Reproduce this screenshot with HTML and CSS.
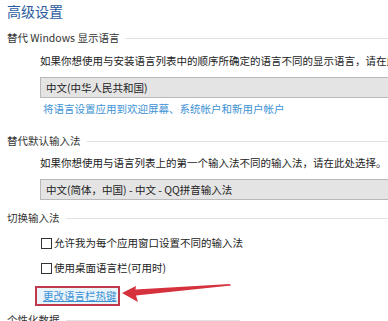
FILE: index.html
```html
<!DOCTYPE html>
<html lang="zh-CN">
<head>
    <meta charset="UTF-8">
    <meta name="viewport" content="width=device-width, initial-scale=1.0">
    <title>高级设置</title>
    <link rel="stylesheet" href="styles.css">
</head>
<body>
    <div class="page">
        <div class="title">高级设置</div>

        <div class="heading h1">替代 Windows 显示语言</div>
        <div class="desc d1">如果你想使用与安装语言列表中的顺序所确定的语言不同的显示语言，请在此处选择。</div>
        <div class="select s1">中文(中华人民共和国)</div>
        <a class="link l1" href="#">将语言设置应用到欢迎屏幕、系统帐户和新用户帐户</a>

        <div class="heading h2">替代默认输入法</div>
        <div class="desc d2">如果你想使用与语言列表上的第一个输入法不同的输入法，请在此处选择。</div>
        <div class="select s2">中文(简体，中国) - 中文 - QQ拼音输入法</div>

        <div class="heading h3">切换输入法</div>
        <label class="check c1"><span class="box"></span>允许我为每个应用窗口设置不同的输入法</label>
        <label class="check c2"><span class="box"></span>使用桌面语言栏(可用时)</label>
        <div class="hotkey">
            <a class="link marked" href="#">更改语言栏热键</a>
            <svg class="arrow" width="115" height="24" viewBox="0 0 115 24">
                <path d="M2 12 L16 5 L15.5 8.5 L110 3 L111 4.5 L16 14.5 L18 21 Z" fill="#d6323d"/>
            </svg>
        </div>

        <div class="heading h4 short">个性化数据</div>
    </div>
</body>
</html>
```

FILE: styles.css
```css
body { margin: 0; background: #fff; font-family: "Noto Sans CJK SC", "Noto Sans", sans-serif; color: #222; }
.page { padding-left: 7px; width: 381px; overflow: hidden; height: 321px; }
.title { height: 22px; line-height: 22px; font-size: 14px; color: #2a5b9e; }

.heading { display: flex; align-items: center; font-size: 10.5px; line-height: 12px; height: 12px; color: #333; white-space: nowrap; }
.heading::after { content: ""; flex: 1; border-top: 1px solid #e2e2e2; margin-left: 6px; }
.heading.short { width: 233px; }
.h1 { margin-top: 10px; }
.h2 { margin-top: 20px; }
.h3 { margin-top: 12px; }
.h4 { margin-top: 13px; }

.desc { margin-left: 33px; font-size: 10.5px; line-height: 12px; height: 12px; white-space: nowrap; }
.d1 { margin-top: 11px; }
.d2 { margin-top: 10px; }

.select { margin-left: 33px; margin-top: 10px; height: 19px; line-height: 19px; padding-left: 5px; font-size: 10.5px; background: #e4e4e4; border: 1px solid #b9b9b9; border-right: none; white-space: nowrap; }

.link { display: block; color: #3d92d4; font-size: 10.5px; line-height: 12px; white-space: nowrap; text-decoration: none; }
.l1 { margin: 5px 0 0 36px; }

.check { display: flex; align-items: center; margin-left: 34px; height: 12px; font-size: 10.5px; line-height: 12px; white-space: nowrap; }
.c1 { margin-top: 13px; }
.c2 { margin-top: 13px; }
.box { width: 9px; height: 9px; border: 1px solid #333; background: #fff; margin-right: 2px; }

.hotkey { position: relative; margin-top: 7px; height: 20px; }
.marked { display: inline-block; margin-left: 28px; height: 16px; line-height: 16px; padding: 0 6px 0 6px; border: 2px solid #c03a4b; text-decoration: underline; background: #eaf4fb; width: 69px; }
.arrow { position: absolute; left: 113px; top: 0; }
```
